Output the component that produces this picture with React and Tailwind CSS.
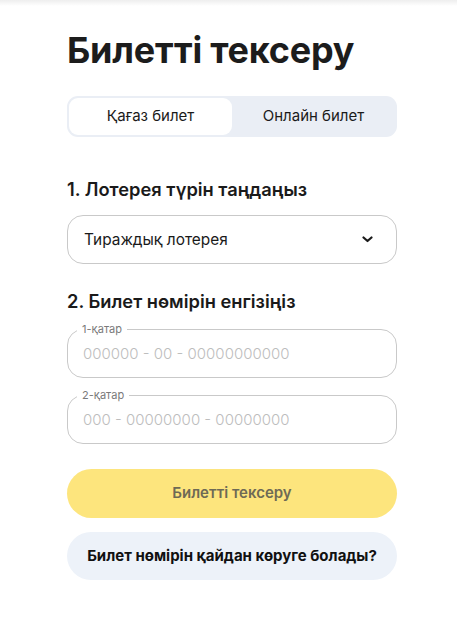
import React from "react";

const font = { fontFamily: "Inter, 'Noto Sans', sans-serif" };

function TicketField({ label, placeholder }) {
  return (
    <fieldset className="h-[55px] -mt-[5px] rounded-[16px] border border-[#c9c9c9] px-[9px] pb-[5px]">
      <legend className="px-[5px] text-[11px] leading-[12px] text-[#7a7a7a]">{label}</legend>
      <input
        className="w-full h-[36px] px-[6px] bg-transparent text-[15px] font-light outline-none placeholder:text-[#bdbdbd]"
        placeholder={placeholder}
      />
    </fieldset>
  );
}

export default function App() {
  return (
    <div className="min-h-[620px] bg-white text-[#1a1a1a]" style={font}>
      <div className="h-[6px] bg-gradient-to-b from-[#eeeeee] to-white" />
      <div className="w-[330px] ml-[67px] pt-[22px]">
        <h1 className="text-[36px] leading-[44px] font-bold tracking-[-0.2px] text-[#1c1c1c]">Билетті тексеру</h1>

        <div className="mt-[24px] h-[41px] flex rounded-[11px] bg-[#eaeef5] p-[2px]">
          <button className="flex-1 rounded-[9px] bg-white text-[15px] text-[#1a1a1a]">Қағаз билет</button>
          <button className="flex-1 text-[15px] text-[#1a1a1a]">Онлайн билет</button>
        </div>

        <h2 className="mt-[40px] text-[18.3px] leading-[24px] font-semibold">1. Лотерея түрін таңдаңыз</h2>

        <div className="mt-[14px] h-[49px] flex items-center justify-between rounded-[16px] border border-[#c9c9c9] pl-[16px] pr-[23px]">
          <span className="text-[15.4px]">Тираждық лотерея</span>
          <svg width="11" height="7" viewBox="0 0 11 7" fill="none">
            <path d="M1.5 1.5 L5.5 5 L9.5 1.5" stroke="#1a1a1a" strokeWidth="2.2" strokeLinecap="round" strokeLinejoin="round" />
          </svg>
        </div>

        <h2 className="mt-[25px] text-[18.3px] leading-[24px] font-semibold">2. Билет нөмірін енгізіңіз</h2>

        <div className="mt-[15px] flex flex-col gap-[16px]">
          <TicketField label="1-қатар" placeholder="000000 - 00 - 00000000000" />
          <TicketField label="2-қатар" placeholder="000 - 00000000 - 00000000" />
        </div>

        <button className="mt-[25px] w-full h-[49px] rounded-full bg-[#fde57d] text-[15px] font-semibold text-[#6e6a55]">
          Билетті тексеру
        </button>
        <button className="mt-[14px] w-full h-[48px] rounded-full bg-[#edf2f9] text-[15px] font-bold text-[#111]">
          Билет нөмірін қайдан көруге болады?
        </button>
      </div>
    </div>
  );
}
